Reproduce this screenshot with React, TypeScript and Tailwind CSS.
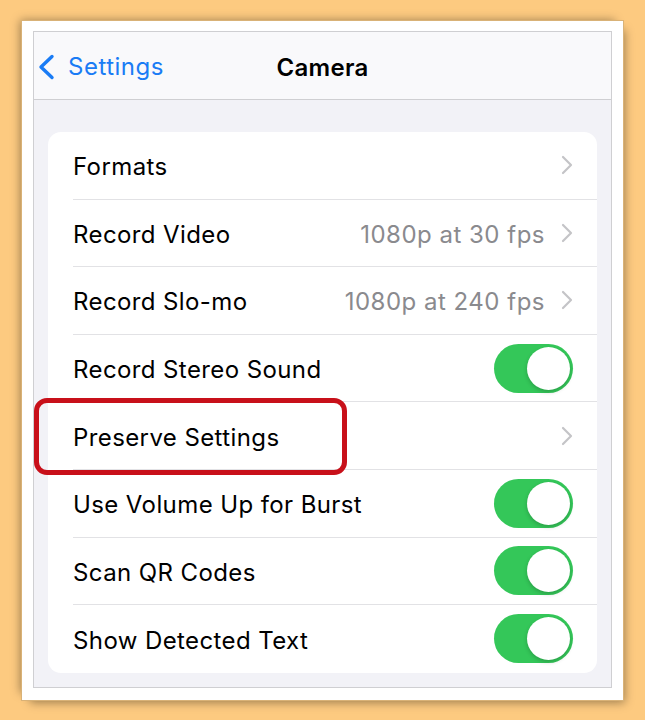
import React from 'react';

type Row =
  | { label: string; kind: 'link'; value?: string; highlight?: boolean }
  | { label: string; kind: 'toggle' };

const rows: Row[] = [
  { label: 'Formats', kind: 'link' },
  { label: 'Record Video', kind: 'link', value: '1080p at 30 fps' },
  { label: 'Record Slo-mo', kind: 'link', value: '1080p at 240 fps' },
  { label: 'Record Stereo Sound', kind: 'toggle' },
  { label: 'Preserve Settings', kind: 'link', highlight: true },
  { label: 'Use Volume Up for Burst', kind: 'toggle' },
  { label: 'Scan QR Codes', kind: 'toggle' },
  { label: 'Show Detected Text', kind: 'toggle' },
];

function Chevron() {
  return (
    <svg width="12" height="20" viewBox="0 0 12 20" className="shrink-0">
      <polyline points="2,2 10,10 2,18" fill="none" stroke="#c4c4c7" strokeWidth="2.2" strokeLinecap="round" strokeLinejoin="round" />
    </svg>
  );
}

function Toggle() {
  return (
    <div className="flex h-[49px] w-[79px] items-center justify-end rounded-full bg-[#34c759] p-[3px]">
      <div className="h-[43px] w-[43px] rounded-full bg-white shadow-[0_2px_4px_rgba(0,0,0,0.2)]" />
    </div>
  );
}

export default function App() {
  return (
    <div className="min-h-[720px] w-[645px] bg-[#fdca80] px-[21px] pt-[20px] font-['Inter','Liberation_Sans',sans-serif]">
      <div className="w-[603px] border border-[#d9b277] bg-white pb-[12px] pl-[11px] pr-[11px] pt-[10px] shadow-[-5px_-4px_9px_-4px_rgba(0,0,0,0.35),5px_6px_9px_-4px_rgba(0,0,0,0.35)]">
        <div className="border border-[#cfcfd2] bg-[#f2f2f7]">
          {/* nav bar */}
          <div className="relative flex h-[68px] items-center border-b border-[#cfcfd2] bg-[#f9f9fb] pt-[2px]">
            <div className="flex items-center gap-[13px] pl-[3px] text-[24px] tracking-[0.5px] text-[#1a7cf5]">
              <svg width="18" height="26" viewBox="0 0 18 26">
                <polyline points="15,2.5 4,13 15,23.5" fill="none" stroke="#1a7cf5" strokeWidth="3.4" strokeLinecap="round" strokeLinejoin="round" />
              </svg>
              <span>Settings</span>
            </div>
            <div className="absolute inset-x-0 pt-[2px] text-center text-[24px] font-semibold tracking-[0.3px] text-black">Camera</div>
          </div>

          {/* list */}
          <div className="px-[14px] pb-[14px] pt-[32px]">
            <div className="rounded-[13px] bg-white">
              {rows.map((row, i) => (
                <div key={row.label} className="relative flex h-[67.6px] items-center pl-[25px]">
                  {row.kind === 'link' && row.highlight && (
                    <div className="absolute left-[-14px] top-[-4px] h-[77px] w-[313px] rounded-[13px] border-[5px] border-[#c8101a]" />
                  )}
                  <div className={`flex h-full flex-1 items-center pr-[24px] ${i < rows.length - 1 ? 'border-b border-[#e2e2e5]' : ''}`}>
                    <span className="flex-1 pt-[4px] text-[24px] tracking-[0.4px] text-black">{row.label}</span>
                    {row.kind === 'link' ? (
                      <div className="flex items-center gap-[16px]">
                        {row.value && <span className="pt-[4px] text-[24px] tracking-[0.5px] text-[#8a8a8e]">{row.value}</span>}
                        <Chevron />
                      </div>
                    ) : (
                      <Toggle />
                    )}
                  </div>
                </div>
              ))}
            </div>
          </div>
        </div>
      </div>
    </div>
  );
}
